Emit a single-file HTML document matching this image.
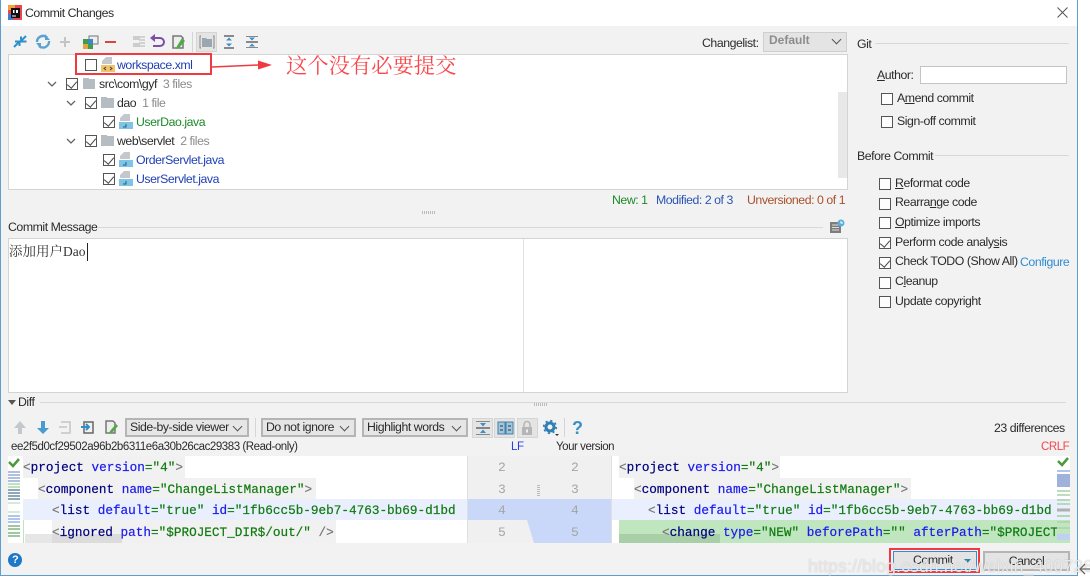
<!DOCTYPE html>
<html><head><meta charset="utf-8"><style>
*{box-sizing:border-box}
html,body{margin:0;padding:0;background:#fff}
#p{position:relative;width:1090px;height:584px;overflow:hidden;background:#fff;font-family:"Liberation Sans","Noto Sans CJK SC",sans-serif;font-size:12.3px;letter-spacing:-.45px;color:#2b2b2b}
#p div,#p span.a,#p svg{position:absolute}
.t{white-space:nowrap;line-height:16px;height:16px}
.g{color:#8c8c8c}
.cb{width:12px;height:12px;border:1px solid #555;background:#fdfdfd}
.cb.c:after{content:"";position:absolute;left:2px;top:0px;width:5px;height:8px;border:solid #444;border-width:0 1.2px 1.2px 0;transform:rotate(40deg)}
.line{height:1px;background:#d8d8d8}
.btn{background:#e6e6e6;border:2px solid #b5b5b5;line-height:15px;white-space:nowrap;padding-left:3px}
.btn:after{content:"";position:absolute;right:6px;top:3px;width:6px;height:6px;border:solid #555;border-width:0 1px 1px 0;transform:rotate(45deg)}
.ib{background:#e4e4e4;border:1px solid #d5d5d5;width:21px;height:20px}
.code{font-family:"Liberation Mono",monospace;font-size:12.7px;letter-spacing:0;-webkit-text-stroke:.2px;line-height:21px;height:21px;white-space:pre;color:#000}
.code b{font-weight:normal;color:#1a1aee}.code i{font-style:normal;color:#107a10}.code u{text-decoration:none;color:#777}.code em{font-style:normal;color:#000080}
.n{color:#a5a5a5;font-family:"Liberation Mono",monospace;font-size:13px;letter-spacing:0;line-height:20px}
</style></head><body><div id="p">
<div style="left:0;top:0;width:1078px;height:576px;background:#f2f2f2;border:1px solid #5f9fd0;border-top:0"></div>
<div style="left:1px;top:0;width:1076px;height:26px;background:#fff"></div>

<svg style="left:8px;top:5px" width="14" height="15" viewBox="0 0 14 15"><rect x="0" y="0" width="14" height="15" fill="#e8484c"/><rect x="0" y="0" width="7" height="5" fill="#f2a33a"/><rect x="0" y="9" width="5" height="6" fill="#3a7fd0"/><rect x="3" y="3" width="9" height="10" fill="#111"/><rect x="4" y="10.500" width="4" height="1" fill="#fff"/><rect x="5" y="5" width="1.500" height="3" fill="#fff"/><rect x="8" y="5" width="2" height="3" fill="#fff"/></svg>
<div class="t" style="left:25px;top:5px">Commit Changes</div>
<svg style="left:1056px;top:6px" width="13" height="13" viewBox="0 0 13 13"><path d="M1.5 1.5L11.5 11.500M11.500 1.500L1.500 11.500" stroke="#555" stroke-width="1"/></svg>

<!-- toolbar -->
<svg style="left:12px;top:33px" width="180" height="18" viewBox="0 0 180 18" fill="none">
<path d="M2 14l5-5M3 8.500h4.500V13M14 3L9 8M14.500 8.500H9V3.500" stroke="#2f8fc8" stroke-width="2"/>
<path d="M25 9a6 6 0 0 1 10-4.500M37 8a6 6 0 0 1-10 5" stroke="#5aa3cf" stroke-width="2.400"/><path d="M33 1v6h5zM29 16v-6h-5z" fill="#5aa3cf"/>
<path d="M53 4v10M48 9h10" stroke="#c4c4c4" stroke-width="2"/>
<rect x="77" y="3" width="9" height="8" fill="#eee" stroke="#777"/><rect x="71" y="6" width="10" height="10" fill="#3f9b4f"/><rect x="76" y="6" width="5" height="5" fill="#3a88c8"/><path d="M71 11h5v5h-5z" fill="#e8a33a"/>
<path d="M93 9h11" stroke="#d9463e" stroke-width="2"/>
<path d="M127 4h6M127 7h6M127 10h6M127 13h6" stroke="#c8c8c8" stroke-width="1.500"/><rect x="115" y="4" width="0" height="0"/><rect x="115" y="3" width="0" height="0"/><rect x="115" y="3" width="0" height="0"/><rect x="116" y="3" width="7" height="4" fill="#ccc" transform="translate(5 0)"/><rect x="116" y="10" width="7" height="4" fill="#ccc" transform="translate(5 0)"/>
<path d="M141 5h7a4 4 0 0 1 0 8h-7" stroke="#7c4ea8" stroke-width="2"/><path d="M143 1l-5 4 5 4z" fill="#7c4ea8"/>
<path d="M161 3h8l2 2v10h-10z" fill="#eee" stroke="#777" stroke-width="1.500"/><path d="M170 5l3 3-6 7-3 1 1-3z" fill="#55a84a"/>
</svg>
<div style="left:192px;top:32px;width:1px;height:20px;background:#d5d5d5"></div>
<div class="ib" style="left:196px;top:32px"></div>
<svg style="left:199px;top:35px" width="70" height="15" viewBox="0 0 70 15" fill="none">
<path d="M2 1H1v12h1M14 1h1v12h-1" stroke="#888"/><path d="M3 3h4l1 1h5v8H3z" fill="#9aa7b0"/>
<path d="M25 1h10M25 13h10" stroke="#666" stroke-width="1.500"/><path d="M30 2.500l-3 3h6zM30 11.500l-3-3h6z" fill="#3a8fc4"/>
<path d="M47 7h12" stroke="#666" stroke-width="1.500"/><path d="M47 1.500h12M47 12.500h12" stroke="#888"/><path d="M53 5.500l-3-3h6zM53 8.500l-3 3h6z" fill="#3a8fc4"/>
</svg>

<div class="t" style="left:702px;top:35px">Changelist:</div>
<div class="btn" style="left:763px;top:32px;width:84px;height:20px;background:#e4e4e4;border:1px solid #cfcfcf;color:#8c8c8c;font-weight:bold;font-size:12px;padding-left:5px;letter-spacing:0">Default</div>

<!-- tree -->
<div style="left:8px;top:54px;width:840px;height:136px;background:#fff;border:1px solid #d4d4d4"></div>
<div style="left:838px;top:92px;width:9px;height:86px;background:#e8e8e8"></div>
<div class="cb" style="left:85px;top:59px"></div>
<svg style="left:101px;top:57px" width="14" height="15" viewBox="0 0 14 15"><path d="M5 0h6v7H1V4z" fill="#c4c8cc"/><rect x="0" y="8" width="14" height="7" fill="#f2c36a"/><path d="M5 10l-2 1.500L5 13M9 10l2 1.500L9 13" stroke="#444" fill="none"/></svg>
<div class="t" style="left:117px;top:57px;color:#1f3fb5">workspace.xml</div>
<div style="left:75px;top:53px;width:137px;height:22px;border:2px solid #f03a3f"></div>
<svg style="left:212px;top:57px" width="62" height="16" viewBox="0 0 62 16"><path d="M0 10L46 8" stroke="#f03a3f" stroke-width="1.500"/><path d="M46 3.500L60 8 46 12.500z" fill="#f03a3f"/></svg>
<div class="t" style="left:286px;top:52px;height:26px;line-height:26px;font-size:21.300px;letter-spacing:0;color:#f8484c;font-family:'Noto Serif CJK SC',serif">这个没有必要提交</div>

<svg style="left:0;top:0" width="110" height="190" viewBox="0 0 110 190" fill="none" stroke="#666" stroke-width="1.300"><path d="M48 82l4 4 4-4M67 101l4 4 4-4M67 139l4 4 4-4"/></svg>
<div class="cb c" style="left:66px;top:78px"></div>
<div style="left:83px;top:79px;width:12px;height:10px;background:#b5bcc2"></div><div style="left:83px;top:78px;width:6px;height:3px;background:#b5bcc2"></div>
<div class="t" style="left:99px;top:76px">src\com\gyf&nbsp; <span class="g">3 files</span></div>
<div class="cb c" style="left:85px;top:97px"></div>
<div style="left:101px;top:98px;width:13px;height:10px;background:#b5bcc2"></div><div style="left:101px;top:97px;width:6px;height:3px;background:#b5bcc2"></div>
<div class="t" style="left:117px;top:95px">dao&nbsp; <span class="g">1 file</span></div>
<div class="cb c" style="left:103px;top:116px"></div>
<svg style="left:119px;top:114px" width="14" height="15" viewBox="0 0 14 15"><path d="M5 0h6v7H1V4z" fill="#c4c8cc"/><rect x="0" y="8" width="14" height="7" fill="#7fc4e4"/><path d="M7 10v3H4" stroke="#1f5f80" fill="none"/></svg>
<div class="t" style="left:136px;top:114px;color:#1d8a2a">UserDao.java</div>
<div class="cb c" style="left:85px;top:135px"></div>
<div style="left:101px;top:136px;width:13px;height:10px;background:#b5bcc2"></div><div style="left:101px;top:135px;width:6px;height:3px;background:#b5bcc2"></div>
<div class="t" style="left:117px;top:133px">web\servlet&nbsp; <span class="g">2 files</span></div>
<div class="cb c" style="left:103px;top:154px"></div>
<svg style="left:119px;top:152px" width="14" height="15" viewBox="0 0 14 15"><path d="M5 0h6v7H1V4z" fill="#c4c8cc"/><rect x="0" y="8" width="14" height="7" fill="#7fc4e4"/><path d="M7 10v3H4" stroke="#1f5f80" fill="none"/></svg>
<div class="t" style="left:136px;top:152px;color:#1f3fb5">OrderServlet.java</div>
<div class="cb c" style="left:103px;top:173px"></div>
<svg style="left:119px;top:171px" width="14" height="15" viewBox="0 0 14 15"><path d="M5 0h6v7H1V4z" fill="#c4c8cc"/><rect x="0" y="8" width="14" height="7" fill="#7fc4e4"/><path d="M7 10v3H4" stroke="#1f5f80" fill="none"/></svg>
<div class="t" style="left:136px;top:171px;color:#1f3fb5">UserServlet.java</div>

<div class="t" style="left:612px;top:192px;color:#1d8a2a">New: 1</div>
<div class="t" style="left:656px;top:192px;color:#2a55b5">Modified: 2 of 3</div>
<div class="t" style="left:747px;top:192px;color:#a8502a">Unversioned: 0 of 1</div>
<div style="left:422px;top:211px;width:13px;height:3px;background:repeating-linear-gradient(90deg,#bbb 0 1px,transparent 1px 2px)"></div>

<!-- commit message -->
<div class="t" style="left:8px;top:219px">Commit Message</div>
<div class="line" style="left:97px;top:227px;width:726px"></div>
<svg style="left:830px;top:219px" width="15" height="15" viewBox="0 0 15 15"><path d="M0 3h11v11H0z" fill="#7d7d7d"/><path d="M2 6h7M2 8.500h7M2 11h7" stroke="#ddd"/><circle cx="11" cy="4" r="3.500" fill="#5aaede"/><path d="M11 2v2h2" stroke="#fff" fill="none"/></svg>
<div style="left:8px;top:238px;width:840px;height:155px;background:#fff;border:1px solid #d4d4d4"></div>
<div style="left:523px;top:239px;width:1px;height:153px;background:#e2e2e2"></div>
<div class="t" style="left:9px;top:243px;height:18px;line-height:18px;font-size:13.500px;letter-spacing:0;color:#333;font-family:'Liberation Serif','Noto Serif CJK SC',serif">添加用户Dao</div>
<div style="left:87px;top:243px;width:1px;height:18px;background:#222"></div>

<!-- right panel -->
<div class="t" style="left:857px;top:36px">Git</div>
<div class="line" style="left:875px;top:43px;width:194px"></div>
<div class="t" style="left:877px;top:67px"><span style="text-decoration:underline">A</span>uthor:</div>
<div style="left:920px;top:66px;width:147px;height:18px;background:#fff;border:1px solid #c4c4c4"></div>
<div class="cb" style="left:881px;top:93px"></div><div class="t" style="left:897px;top:90px">A<span style="text-decoration:underline">m</span>end commit</div>
<div class="cb" style="left:881px;top:116px"></div><div class="t" style="left:897px;top:113px">Si<span style="text-decoration:underline">g</span>n-off commit</div>
<div class="t" style="left:857px;top:148px">Before Commit</div>
<div class="line" style="left:935px;top:155px;width:134px"></div>
<div class="cb" style="left:879px;top:178px"></div><div class="t" style="left:895px;top:175px"><span style="text-decoration:underline">R</span>eformat code</div>
<div class="cb" style="left:879px;top:198px"></div><div class="t" style="left:895px;top:194px">Rearra<span style="text-decoration:underline">n</span>ge code</div>
<div class="cb" style="left:879px;top:217px"></div><div class="t" style="left:895px;top:214px"><span style="text-decoration:underline">O</span>ptimize imports</div>
<div class="cb c" style="left:879px;top:237px"></div><div class="t" style="left:895px;top:234px">Perform code analy<span style="text-decoration:underline">s</span>is</div>
<div class="cb c" style="left:879px;top:257px"></div><div class="t" style="left:895px;top:253px">Check TODO (Show All)</div>
<div class="t" style="left:1020px;top:254px;color:#2f8bd0">Configure</div>
<div class="cb" style="left:879px;top:277px"></div><div class="t" style="left:895px;top:273px">C<span style="text-decoration:underline">l</span>eanup</div>
<div class="cb" style="left:879px;top:296px"></div><div class="t" style="left:895px;top:293px">Update copyright</div>

<!-- diff -->
<div style="left:534px;top:403px;width:13px;height:3px;background:repeating-linear-gradient(90deg,#bbb 0 1px,transparent 1px 2px)"></div>
<svg style="left:8px;top:399px" width="8" height="7" viewBox="0 0 8 7"><path d="M0 1h8L4 6z" fill="#555"/></svg>
<div class="t" style="left:18px;top:394px">Diff</div>
<div class="line" style="left:40px;top:402px;width:1026px"></div>

<svg style="left:12px;top:419px" width="108" height="17" viewBox="0 0 108 17" fill="none">
<path d="M8 2l-6 7h4v6h4V9h4z" fill="#c4c8cc"/>
<path d="M29 2v7h-4l6 6 6-6h-4V2z" fill="#4a9cd0"/>
<path d="M49 3h9v11h-9M47 8h8" stroke="#c4c4c4" stroke-width="1.500"/>
<path d="M72 3h9v11h-9z" stroke="#666" stroke-width="1.500"/><path d="M69 8h7M74 5l3 3-3 3" stroke="#2f8fc8" stroke-width="2"/>
<path d="M94 2h7l2 2v10h-9z" fill="#eee" stroke="#777" stroke-width="1.500"/><path d="M104 5l2 2-6 7-3 1 1-3z" fill="#55a84a"/>
</svg>
<div class="btn" style="left:125px;top:418px;width:124px;height:19px">Side-by-side viewer</div>
<div style="left:255px;top:418px;width:1px;height:19px;background:#d5d5d5"></div>
<div class="btn" style="left:261px;top:418px;width:95px;height:19px">Do not ignore</div>
<div class="btn" style="left:362px;top:418px;width:106px;height:19px">Highlight words</div>
<div class="ib" style="left:472px;top:418px"></div>
<div class="ib" style="left:494px;top:418px"></div>
<div class="ib" style="left:517px;top:418px"></div>
<svg style="left:472px;top:418px" width="115" height="20" viewBox="0 0 115 20" fill="none">
<path d="M4 10h14" stroke="#666" stroke-width="1.500"/><path d="M4 3.500h14M4 16.500h14" stroke="#888"/><path d="M11 8.500l-3-3.500h6zM11 11.500l3 3.500H8z" fill="#3a8fc4"/>
<rect x="26" y="4" width="7" height="12" fill="#9cc6e2" stroke="#4a7f9f"/><rect x="34" y="4" width="7" height="12" fill="#9cc6e2" stroke="#4a7f9f"/><path d="M28 8h3M28 12h3M36 8h3M36 12h3" stroke="#333"/>
<rect x="50" y="9" width="10" height="8" fill="#b5b5b5"/><path d="M52 9V6.500a3 3 0 0 1 6 0V9" stroke="#b5b5b5" stroke-width="1.500"/><rect x="54" y="11.500" width="2" height="3" fill="#eee"/>
<circle cx="78" cy="9" r="4" stroke="#2f7fb5" stroke-width="3"/><circle cx="78" cy="9" r="6.300" stroke="#2f7fb5" stroke-width="1.600" stroke-dasharray="2.200 2.750"/><path d="M83 16h4l-2 2z" fill="#333"/>
</svg>
<div style="left:564px;top:418px;width:1px;height:19px;background:#d5d5d5"></div>
<div class="t" style="left:572px;top:419px;height:18px;line-height:18px;font-size:18px;font-weight:bold;color:#3a8fc4">?</div>
<div class="t" style="left:994px;top:420px">23 differences</div>

<div class="t" style="left:11px;top:439px;font-size:11.500px">ee2f5d0cf29502a96b2b6311e6a30b26cac29383 (Read-only)</div>
<div class="t" style="left:511px;top:439px;color:#2a3fe0;font-size:11.500px">LF</div>
<div class="t" style="left:556px;top:439px;font-size:11.500px">Your version</div>
<div class="t" style="left:1041px;top:439px;color:#f0484c;font-size:11.500px">CRLF</div>

<!-- left editor -->
<div style="left:8px;top:456px;width:459px;height:87px;background:#fff"></div>
<div style="left:23px;top:456px;width:162px;height:22px;background:#f1f1f1"></div>
<div style="left:23px;top:478px;width:15px;height:21px;background:#fff"></div>
<div style="left:38px;top:478px;width:278px;height:21px;background:#f1f1f1"></div>
<div style="left:23px;top:499px;width:444px;height:21px;background:#e9effd"></div>
<div style="left:52px;top:520px;width:284px;height:23px;background:#f1f1f1"></div>
<div style="left:25px;top:534px;width:96px;height:9px;background:#e6e6e6"></div>
<div style="left:52px;top:534px;width:70px;height:9px;background:#dcdcdc"></div>
<div style="left:23px;top:520px;width:1px;height:23px;background:#bfe3bf"></div>
<div class="code" style="left:23px;top:457px"><u>&lt;</u><em>project</em> <b>version</b><i>=</i><i>"4"</i><u>&gt;</u></div>
<div class="code" style="left:38px;top:479px"><u>&lt;</u><em>component</em> <b>name</b><i>="ChangeListManager"</i><u>&gt;</u></div>
<div class="code" style="left:52px;top:500px;width:408px;overflow:hidden"><u>&lt;</u><em>list</em> <b>default</b><i>="true"</i> <b>id</b><i>="1fb6cc5b-9eb7-4763-bb69-d1bd</i></div>
<div class="code" style="left:52px;top:522px"><u>&lt;</u><em>ignored</em> <b>path</b><i>="$PROJECT_DIR$/out/"</i> <u>/&gt;</u></div>

<!-- left stripe -->
<svg style="left:8px;top:456px" width="13" height="87" viewBox="0 0 13 87"><path d="M1 6l4 4 6-7" stroke="#4c9a3c" stroke-width="2.500" fill="none"/><path d="M0 16h12M0 19h12M0 22h12M0 25h12" stroke="#b0bfe0" stroke-width="2"/><path d="M0 28h12M0 31h12" stroke="#a8d8a8" stroke-width="1.500"/><path d="M0 34h12M0 37h12M0 40h12M0 43h12" stroke="#8fa8b8" stroke-width="2"/><path d="M0 47h12M0 56h12" stroke="#a8d8a8"/><path d="M0 60h12M0 63h12M0 66h12" stroke="#b0c4f0" stroke-width="2"/><path d="M0 70h12M0 73h12M0 77h12M0 80h12" stroke="#a0c8a0" stroke-width="2"/></svg>

<!-- gutter -->
<div style="left:467px;top:456px;width:145px;height:87px;background:#f0f0f0"></div>
<div style="left:467px;top:499px;width:145px;height:21px;background:#c9d8f8"></div>
<svg style="left:467px;top:520px" width="145" height="23" viewBox="0 0 145 23"><path d="M60 0h85v23H67z" fill="#c9d8f8"/></svg>
<div style="left:467px;top:456px;width:1px;height:87px;background:#e0e0e0"></div>
<div style="left:611px;top:456px;width:1px;height:87px;background:#e0e0e0"></div>
<div class="n" style="left:498px;top:458px">2</div><div class="n" style="left:571px;top:458px">2</div>
<div class="n" style="left:498px;top:480px">3</div><div class="n" style="left:571px;top:480px">3</div>
<div class="n" style="left:498px;top:501px">4</div><div class="n" style="left:571px;top:501px">4</div>
<div class="n" style="left:498px;top:523px">5</div><div class="n" style="left:571px;top:523px">5</div>
<div style="left:537px;top:484px;width:3px;height:12px;background:repeating-linear-gradient(0deg,#bbb 0 1px,transparent 1px 2px)"></div>

<!-- right editor -->
<div style="left:612px;top:456px;width:458px;height:87px;background:#fff"></div>
<div style="left:619px;top:456px;width:161px;height:22px;background:#f1f1f1"></div>
<div style="left:634px;top:478px;width:277px;height:21px;background:#f1f1f1"></div>
<div style="left:612px;top:499px;width:458px;height:21px;background:#e9effd"></div>
<div style="left:619px;top:520px;width:451px;height:23px;background:#bfe6bf"></div>
<div style="left:619px;top:534px;width:101px;height:9px;background:#a8cfa8"></div>
<div class="code" style="left:619px;top:457px"><u>&lt;</u><em>project</em> <b>version</b><i>=</i><i>"4"</i><u>&gt;</u></div>
<div class="code" style="left:634px;top:479px"><u>&lt;</u><em>component</em> <b>name</b><i>="ChangeListManager"</i><u>&gt;</u></div>
<div class="code" style="left:648px;top:500px;width:410px;overflow:hidden"><u>&lt;</u><em>list</em> <b>default</b><i>="true"</i> <b>id</b><i>="1fb6cc5b-9eb7-4763-bb69-d1bd</i></div>
<div class="code" style="left:662px;top:522px;width:398px;overflow:hidden"><u>&lt;</u><em>change</em> <b>type</b><i>="NEW"</i> <b>beforePath</b><i>=""</i> <b>afterPath</b><i>="$PROJECT</i></div>
<!-- right stripe -->
<svg style="left:1057px;top:456px" width="13" height="87" viewBox="0 0 13 87"><path d="M1 5l4 4 6-7" stroke="#4c9a3c" stroke-width="2.500" fill="none"/><rect x="0" y="14" width="13" height="2" fill="#b0c4f0"/><rect x="0" y="18" width="13" height="13" fill="#9fb2dc"/><path d="M0 35h13M0 39h13M0 44h13M0 48h13" stroke="#a8d0a8" stroke-width="1.500"/><path d="M0 54h13" stroke="#b0b0b0" stroke-width="3"/><path d="M0 60h13M0 66h13M0 72h13" stroke="#b0d8b0" stroke-width="2"/><rect x="0" y="78" width="13" height="6" fill="#c0d0f4"/></svg>

<!-- bottom -->
<svg style="left:8px;top:553px" width="14" height="14" viewBox="0 0 14 14"><circle cx="7" cy="7" r="7" fill="#1e78c8"/></svg>
<div class="t" style="left:12px;top:553px;font-weight:bold;font-size:11px;height:14px;line-height:14px;color:#fff">?</div>
<div style="left:889px;top:548px;width:91px;height:25px;border:2px solid #f03a3f"></div>
<div style="left:893px;top:551px;width:84px;height:19px;background:#e4e4e4;border:1px solid #2d8fd8;text-align:left;padding-left:19px;line-height:17px">Commit</div>
<svg style="left:964px;top:559px" width="7" height="5" viewBox="0 0 7 5"><path d="M0 0h7L3.500 4z" fill="#2f7fb5"/></svg>
<div style="left:983px;top:551px;width:87px;height:20px;background:#e4e4e4;border:2px solid #b5b5b5;text-align:center;line-height:16px">Cancel</div>
<div class="t" style="left:808px;top:555px;height:22px;line-height:22px;font-size:17.500px;color:rgba(238,238,238,.9);letter-spacing:.2px;text-shadow:0 0 1px rgba(150,150,150,.7)">https://blog.csdn.net/weixin_40072836</div>
<svg style="left:1078px;top:562px" width="12" height="14" viewBox="0 0 12 14"><path d="M12 7H2M7 2L2 7l5 5" stroke="#666" stroke-width="1.300" fill="none"/></svg>
</div></body></html>
